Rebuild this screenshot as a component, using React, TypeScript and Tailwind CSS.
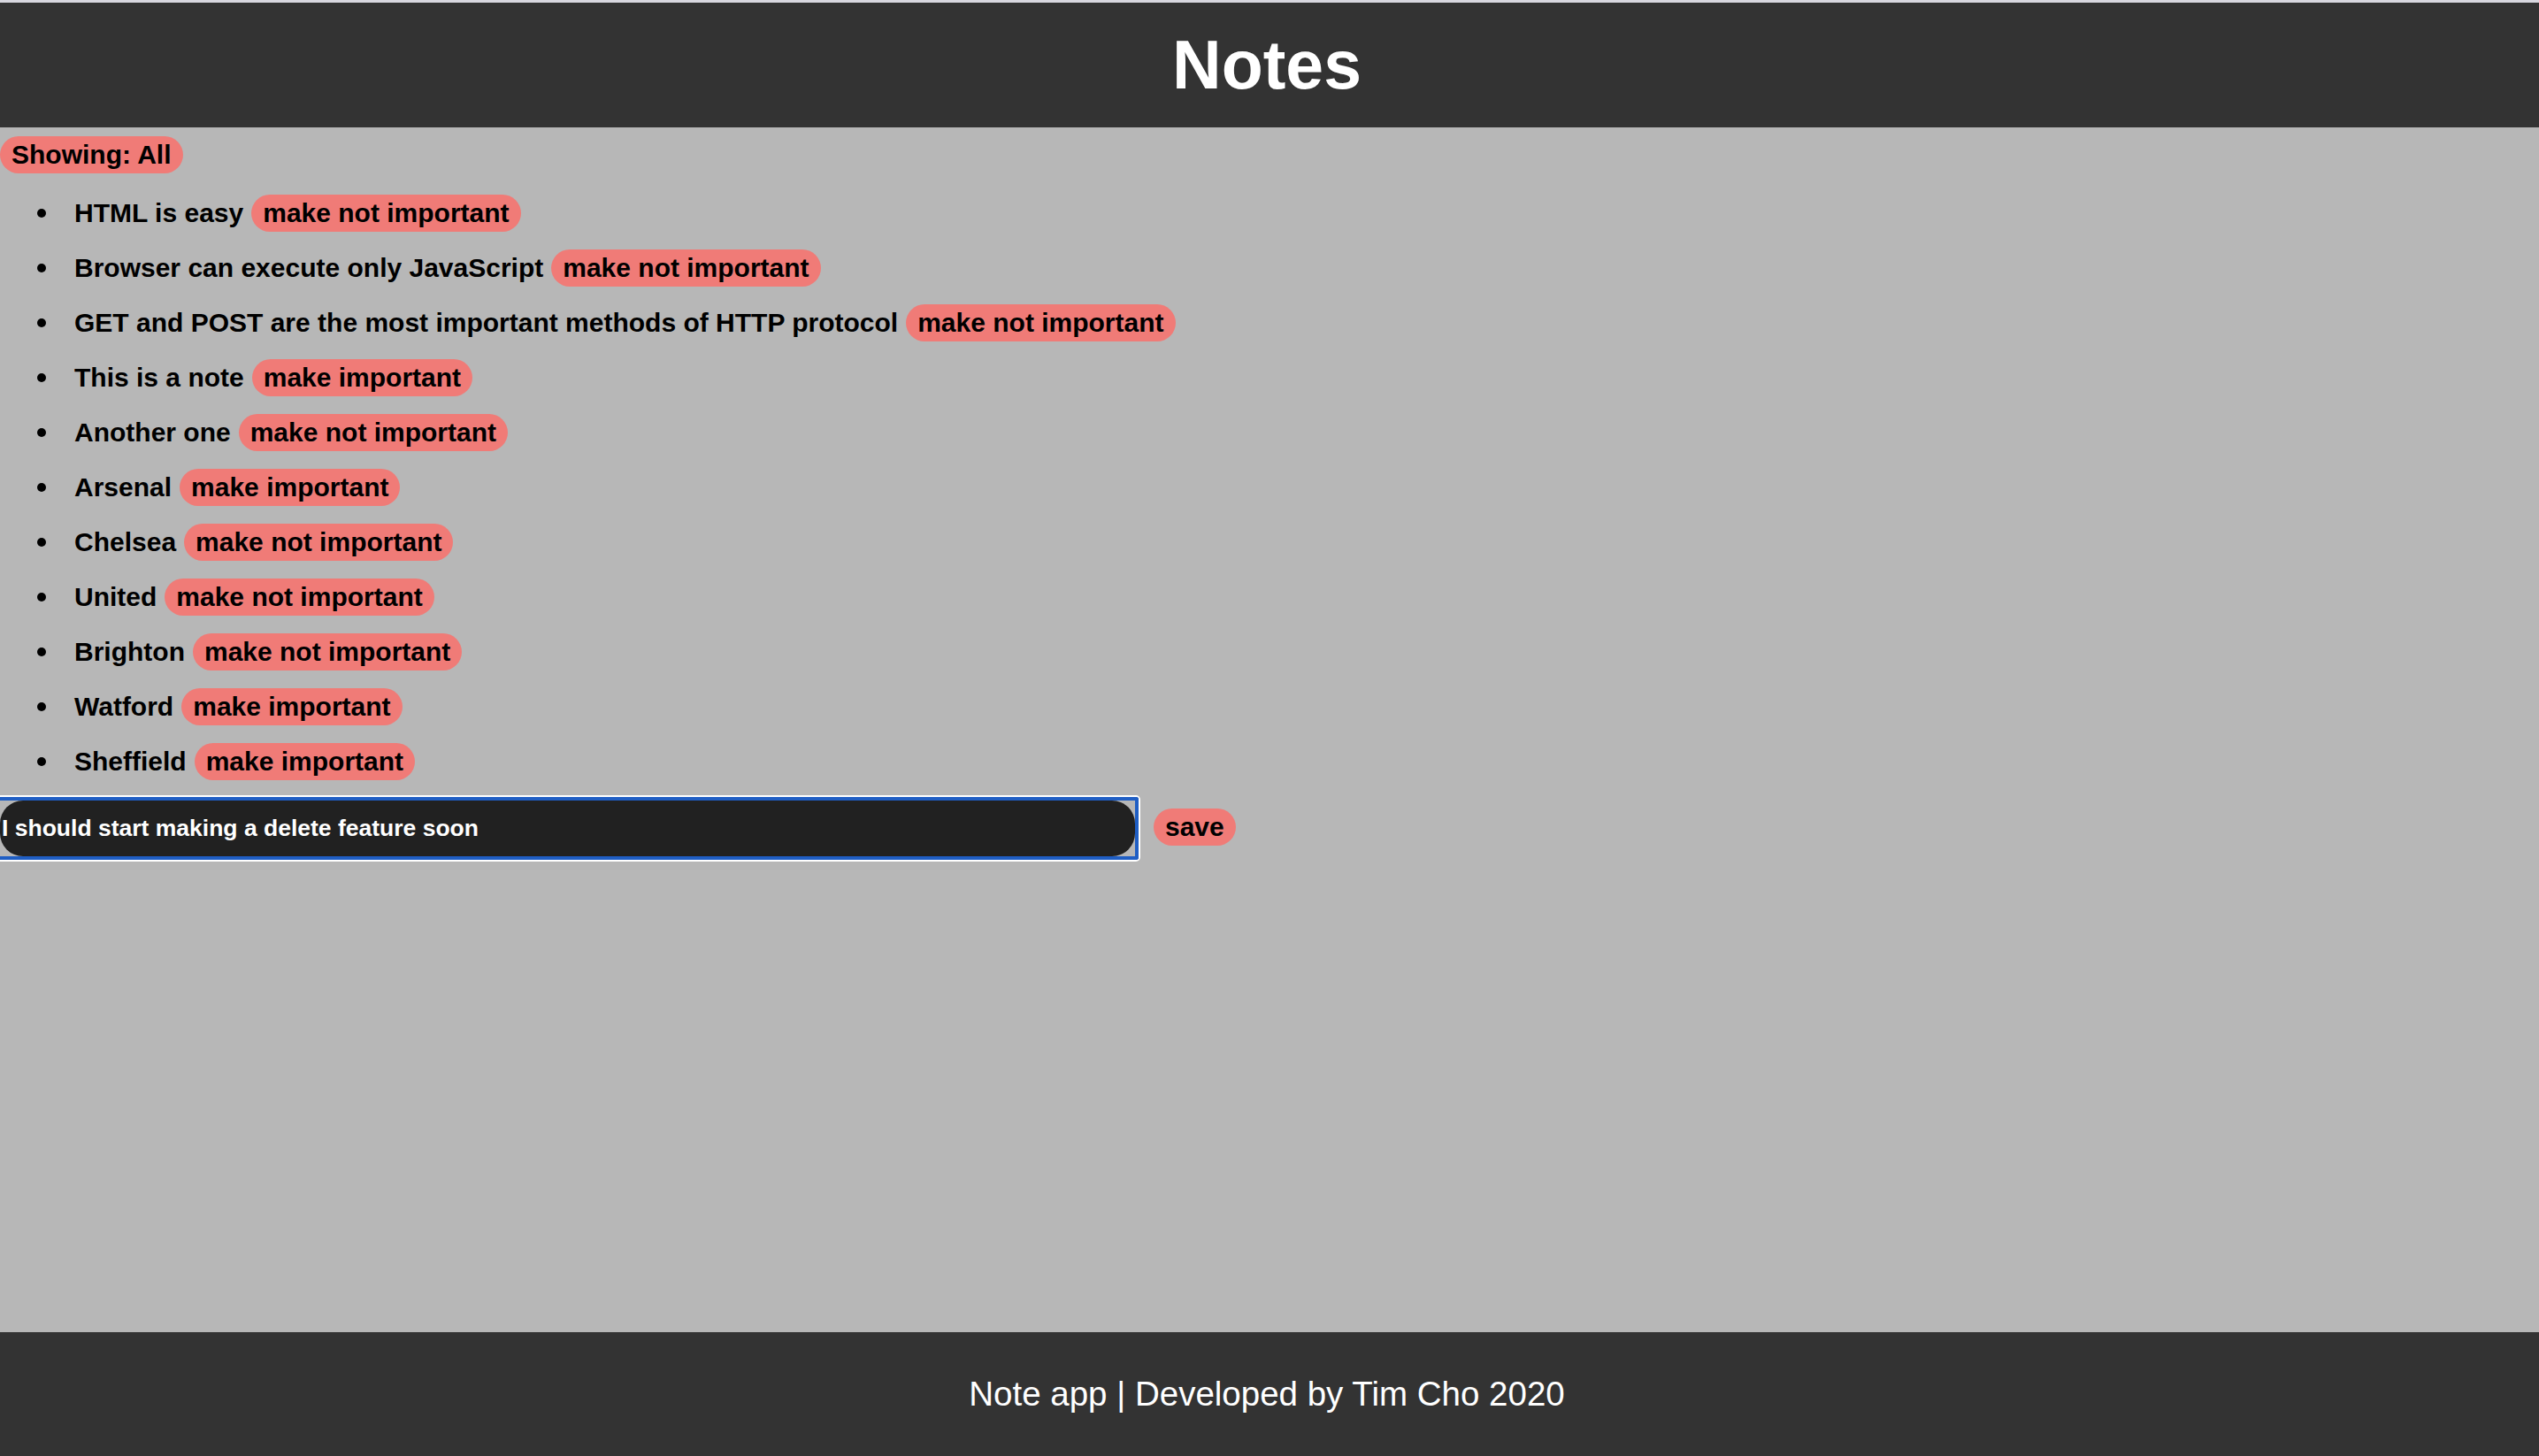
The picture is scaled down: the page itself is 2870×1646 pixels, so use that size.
import { useState } from 'react'

type Note = { id: number; content: string; important: boolean }

const initialNotes: Note[] = [
	{ id: 1, content: 'HTML is easy', important: true },
	{ id: 2, content: 'Browser can execute only JavaScript', important: true },
	{ id: 3, content: 'GET and POST are the most important methods of HTTP protocol', important: true },
	{ id: 4, content: 'This is a note', important: false },
	{ id: 5, content: 'Another one', important: true },
	{ id: 6, content: 'Arsenal', important: false },
	{ id: 7, content: 'Chelsea', important: true },
	{ id: 8, content: 'United', important: true },
	{ id: 9, content: 'Brighton', important: true },
	{ id: 10, content: 'Watford', important: false },
	{ id: 11, content: 'Sheffield', important: false },
]

const pill =
	'inline-flex items-center h-[42px] px-[13px] rounded-full bg-[#f07b77] text-black text-[30px] font-bold leading-none cursor-pointer'

function NoteItem({ note, toggle }: { note: Note; toggle: () => void }) {
	const label = note.important ? 'make not important' : 'make important'

	return (
		<li className="flex items-center h-[62px] pl-[42px]">
			<span className="w-[10px] h-[10px] rounded-full bg-black shrink-0" />
			<span className="ml-[32px] text-[30px] font-bold text-black leading-none">{note.content}</span>
			<button className={`${pill} ml-[9px]`} onClick={toggle}>
				{label}
			</button>
		</li>
	)
}

export default function App() {
	const [notes, setNotes] = useState(initialNotes)
	const [newNote, setNewNote] = useState('I should start making a delete feature soon')

	const toggleImportance = (id: number) => {
		setNotes(notes.map((n) => (n.id === id ? { ...n, important: !n.important } : n)))
	}

	const addNote = (e: React.FormEvent) => {
		e.preventDefault()
		if (!newNote.trim()) return
		setNotes(notes.concat({ id: notes.length + 1, content: newNote, important: false }))
		setNewNote('')
	}

	return (
		<div
			className="min-h-screen flex flex-col bg-[#b7b7b7]"
			style={{ fontFamily: '"Liberation Sans", Arial, Helvetica, sans-serif' }}
		>
			<div className="h-[3px] bg-[#d8d7df]" />
			<header className="h-[141px] bg-[#333333] flex items-center justify-center pr-[6px]">
				<h1 className="text-[77px] font-bold text-white leading-none">Notes</h1>
			</header>

			<main className="flex-1 pt-[10px]">
				<div>
					<button className={pill}>Showing: All</button>
				</div>
				<ul className="mt-[14px]">
					{notes.map((note) => (
						<NoteItem key={note.id} note={note} toggle={() => toggleImportance(note.id)} />
					))}
				</ul>
				<form className="flex items-center gap-[17px] mt-[9px]" onSubmit={addNote}>
					<div className="border-y-4 border-r-4 border-[#1f5ec4] rounded-r-[3px] shadow-[0_0_0_2px_#ffffff]">
						<input
							value={newNote}
							onChange={(e) => setNewNote(e.target.value)}
							className="block w-[1283px] h-[63px] rounded-[26px] bg-[#212121] text-white text-[26.5px] font-bold pl-[2px] outline-none"
						/>
					</div>
					<button type="submit" className={`${pill} -mt-[3px]`}>
						save
					</button>
				</form>
			</main>

			<footer className="h-[140px] bg-[#333333] flex items-center justify-center pr-[6px]">
				<p className="text-white text-[38.5px] leading-none">Note app | Developed by Tim Cho 2020</p>
			</footer>
		</div>
	)
}
